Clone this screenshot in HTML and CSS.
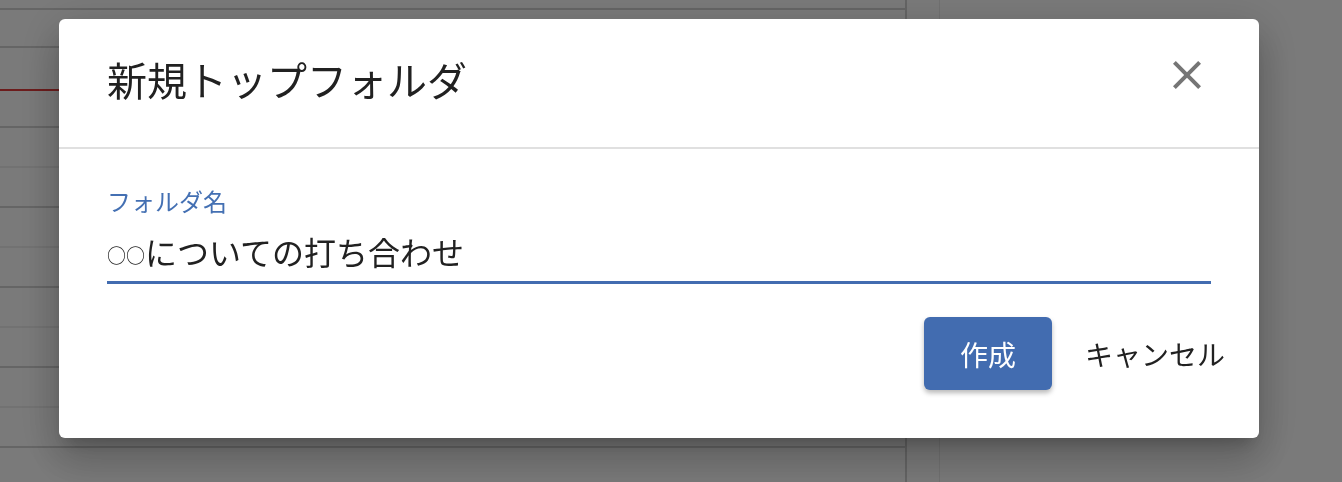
FILE: index.html
```html
<!DOCTYPE html>
<html lang="ja">

<head>
    <meta charset="UTF-8">
    <meta name="viewport" content="width=device-width, initial-scale=1.0">
    <title>新規トップフォルダ</title>
    <link rel="stylesheet" href="styles.css">
</head>

<body>
    <!-- 背景のページ (ダイアログの下) -->
    <div class="page">
        <div class="sheet">
            <div class="topbar"></div>
            <div class="row row-first"></div>
            <div class="row row-red"></div>
            <div class="row row-after-red"></div>
            <div class="row row-faint"></div>
            <div class="row"></div>
            <div class="row row-faint"></div>
            <div class="row"></div>
            <div class="row row-faint"></div>
            <div class="row"></div>
            <div class="row row-faint"></div>
            <div class="row"></div>
        </div>
        <div class="side-col"></div>
        <div class="side-rest"></div>
    </div>

    <!-- ダイアログ -->
    <div class="overlay">
        <div class="dialog">
            <div class="dialog-header">
                <h2 class="dialog-title">新規トップフォルダ</h2>
                <button class="close-btn" aria-label="閉じる">
                    <svg viewBox="0 0 24 24" width="48" height="48">
                        <path d="M19 6.41L17.59 5 12 10.59 6.41 5 5 6.41 10.59 12 5 17.59 6.41 19 12 13.41 17.59 19 19 17.59 13.41 12z" />
                    </svg>
                </button>
            </div>
            <div class="dialog-body">
                <label class="field-label">フォルダ名</label>
                <div class="field-input" contenteditable="true"><span class="mark">○○</span>についての打ち合わせ</div>
            </div>
            <div class="dialog-actions">
                <button class="btn-primary">作成</button>
                <button class="btn-text">キャンセル</button>
            </div>
        </div>
    </div>
</body>

</html>
```

FILE: styles.css
```css
body {
    margin: 0;
    font-family: "Noto Sans CJK JP", "Noto Sans", sans-serif;
    background-color: #ffffff;
    overflow: hidden;
}

/* 背景のページ */
.page {
    display: flex;
    height: 482px;
}

.sheet {
    width: 905px;
    border-right: 2px solid #d2d2d2;
}

.topbar {
    height: 8px;
    border-bottom: 2px solid #d4d4d4;
}

.row {
    height: 40px;
    box-sizing: border-box;
    border-bottom: 2px solid #d4d4d4;
}

.row-first {
    height: 38px;
}

.row-red {
    height: 43px;
    border-bottom-color: #e23c3c;
}

.row-after-red {
    height: 37px;
}

.row-faint {
    border-bottom-color: #efefef;
}

.side-col {
    width: 32px;
    border-right: 1px solid #ececec;
}

.side-rest {
    flex: 1;
}

/* ダイアログ */
.overlay {
    position: fixed;
    inset: 0;
    background-color: rgba(0, 0, 0, 0.52);
    padding: 19px 0 0 59px;
}

.dialog {
    width: 1200px;
    background-color: white;
    border-radius: 6px;
    box-shadow: 0 11px 15px -7px rgba(0, 0, 0, 0.2), 0 24px 38px 3px rgba(0, 0, 0, 0.14), 0 9px 46px 8px rgba(0, 0, 0, 0.12);
}

.dialog-header {
    display: flex;
    justify-content: space-between;
    align-items: flex-start;
    height: 96px;
    padding: 32px 48px 0 48px;
    border-bottom: 2px solid #e0e0e0;
}

.dialog-title {
    margin: 4px 0 0 0;
    font-size: 40px;
    font-weight: 400;
    line-height: 48px;
    color: #212121;
}

.close-btn {
    width: 48px;
    height: 48px;
    padding: 0;
    border: none;
    background: none;
    cursor: pointer;
    fill: #757575;
}

.close-btn svg {
    display: block;
}

.dialog-body {
    display: flex;
    flex-direction: column;
    padding: 37px 48px 0 48px;
}

.field-label {
    font-size: 24px;
    line-height: 30px;
    color: #4470b3;
}

.field-input {
    margin-top: 15px;
    padding: 0 0 10px 0;
    border-bottom: 3px solid #426cb0;
    font-size: 32px;
    line-height: 40px;
    height: 40px;
    color: #212121;
    outline: none;
}

.field-input .mark {
    font-size: 19px;
    vertical-align: 2px;
}

.dialog-actions {
    display: flex;
    justify-content: flex-end;
    align-items: center;
    gap: 17px;
    padding: 33px 18px 48px 0;
}

.btn-primary {
    width: 128px;
    height: 73px;
    border: none;
    border-radius: 6px;
    background-color: #426cb0;
    color: white;
    font-family: inherit;
    font-size: 28px;
    box-shadow: 0 3px 5px rgba(0, 0, 0, 0.28);
    cursor: pointer;
}

.btn-text {
    height: 73px;
    padding: 0 16px;
    border: none;
    background: none;
    color: #212121;
    font-family: inherit;
    font-size: 28px;
    cursor: pointer;
}
```
